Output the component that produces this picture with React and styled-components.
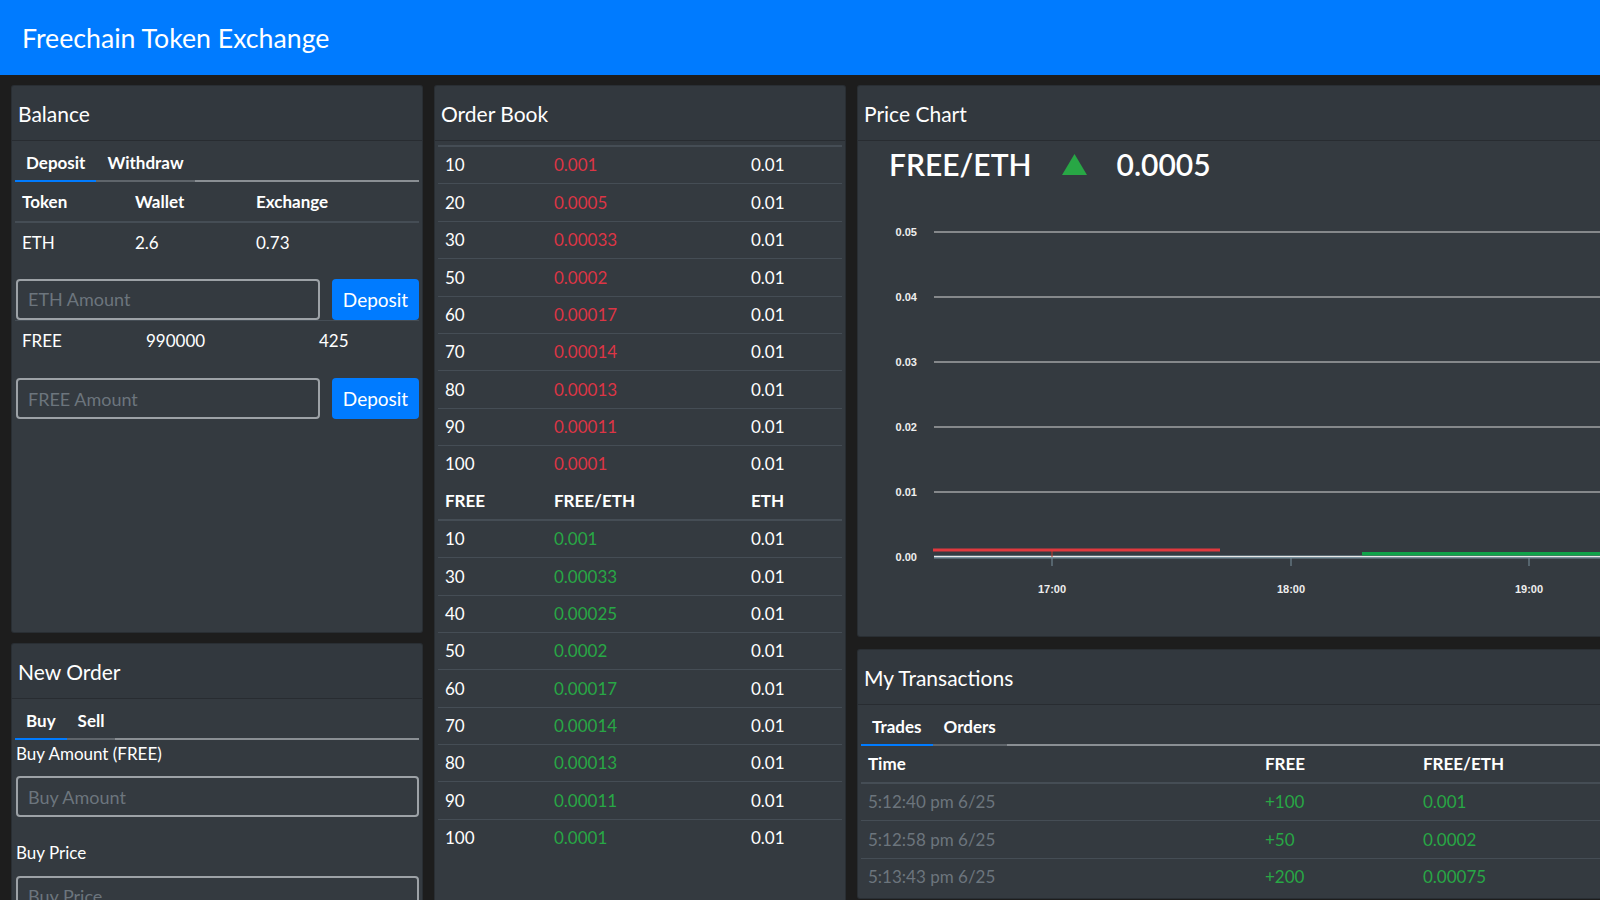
import React from "react";
import styled, { createGlobalStyle } from "styled-components";

const GlobalStyle = createGlobalStyle`
  html, body {
    margin: 0;
    padding: 0;
    background: #1d1d1d;
    overflow: hidden;
  }
  body {
    font-family: "Segoe UI", Lato, "Noto Sans", sans-serif;
    font-size: 17px;
    line-height: 1.5;
    color: #fff;
  }
  * { box-sizing: border-box; }
`;

const Navbar = styled.nav`
  height: 75px;
  background: #007bff;
  display: flex;
  align-items: center;
  padding: 0 22px;
`;

const Brand = styled.div`
  font-size: 26.7px;
  color: #fff;
  line-height: 1.2;
  margin-top: 2px;
`;

const Main = styled.main`
  display: grid;
  grid-template-columns: 412px 412px 850px;
  column-gap: 11px;
  align-items: start;
  padding: 10px 0 0 11px;
  width: 1720px;
`;

const Column = styled.div`
  display: flex;
  flex-direction: column;
  gap: ${(p) => p.$gap || 10}px;
`;

const Card = styled.section`
  background: #343a40;
  border: 1px solid rgba(0, 0, 0, 0.2);
  border-radius: 3px;
  height: ${(p) => (p.$height ? `${p.$height}px` : "auto")};
  overflow: hidden;
`;

const CardHeader = styled.header`
  padding: 15px 6px 14px;
  font-size: 21px;
  line-height: 25px;
  background: rgba(0, 0, 0, 0.03);
  border-bottom: 1px solid rgba(0, 0, 0, 0.2);
`;

const CardBody = styled.div`
  padding: ${(p) => p.$pt || 3}px 3px 3px;
`;

const Tabs = styled.ul`
  display: flex;
  list-style: none;
  margin: 0;
  padding: 0;
  border-bottom: 2px solid #8a8f94;
`;

const Tab = styled.li`
  padding: 6px 11px 4px;
  font-weight: 700;
  margin-bottom: -2px;
  border-bottom: 2px solid ${(p) => (p.$active ? "#007bff" : "#5f656b")};
`;

const Table = styled.table`
  width: 100%;
  border-collapse: collapse;
  table-layout: fixed;
  border-top: ${(p) => (p.$topLine ? "2px solid #454d55" : "none")};

  td, th {
    padding: ${(p) => p.$pad || 5.45}px 7px;
    line-height: 25.5px;
    text-align: left;
    white-space: nowrap;
  }
  th {
    font-weight: 700;
    border-bottom: 2px solid #454d55;
  }
  td {
    border-top: 1px solid #454d55;
  }
`;

const Cell = styled.td`
  color: ${(p) => p.$color || "#fff"};
`;

const AmountForm = styled.form`
  display: flex;
  gap: 12px;
  margin: ${(p) => p.$mt}px 0 0 1px;
`;

const Input = styled.input`
  flex: 1;
  width: 100%;
  height: 41px;
  background: transparent;
  border: 2px solid #9da2a7;
  border-radius: 4px;
  padding: 0 10px;
  font-family: inherit;
  font-size: 18px;
  color: #fff;
  &::placeholder { color: #6c757d; }
`;

const Button = styled.button`
  height: 41px;
  width: 87px;
  background: #007bff;
  border: none;
  border-radius: 4px;
  color: #fff;
  font-family: inherit;
  font-size: 19px;
`;

const Label = styled.div`
  margin: ${(p) => p.$mt}px 0 10px 1px;
`;

const Ticker = styled.div`
  display: flex;
  align-items: center;
  height: 46px;
  padding-left: 31px;
  font-size: 30px;
  font-weight: 600;
  gap: 30px;
`;

const TxTime = styled.span`
  color: #6c757d;
`;

const RED = "#dc3545";
const GREEN = "#28a745";

const asks = [
  ["10", "0.001"], ["20", "0.0005"], ["30", "0.00033"], ["50", "0.0002"],
  ["60", "0.00017"], ["70", "0.00014"], ["80", "0.00013"], ["90", "0.00011"], ["100", "0.0001"],
];
const bids = [
  ["10", "0.001"], ["30", "0.00033"], ["40", "0.00025"], ["50", "0.0002"],
  ["60", "0.00017"], ["70", "0.00014"], ["80", "0.00013"], ["90", "0.00011"], ["100", "0.0001"],
];
const trades = [
  ["5:12:40 pm 6/25", "+100", "0.001"],
  ["5:12:58 pm 6/25", "+50", "0.0002"],
  ["5:13:43 pm 6/25", "+200", "0.00075"],
];

const PriceChart = () => {
  const grid = [0.05, 0.04, 0.03, 0.02, 0.01];
  const ticks = [[194, "17:00"], [433, "18:00"], [671, "19:00"]];
  return (
    <svg width="850" height="420" style={{ display: "block" }}>
      <g fontFamily="'Liberation Sans', Arial, sans-serif" fontSize="11" fontWeight="700" fill="#eee">
        {grid.map((v, i) => (
          <g key={v}>
            <line x1="76" x2="850" y1={45 + i * 65} y2={45 + i * 65} stroke="#d6d6d6" strokeWidth="1.2" />
            <text x="59" y={49 + i * 65} textAnchor="end">{v.toFixed(2)}</text>
          </g>
        ))}
        <text x="59" y="374" textAnchor="end">0.00</text>
        {ticks.map(([x, t]) => (
          <g key={t}>
            <line x1={x} x2={x} y1="370" y2="379" stroke="#78909c" strokeWidth="1" />
            <text x={x} y="406" textAnchor="middle">{t}</text>
          </g>
        ))}
      </g>
      <line x1="76" x2="850" y1="370" y2="370" stroke="#78909c" strokeWidth="3" />
      <line x1="76" x2="850" y1="369.5" y2="369.5" stroke="#e8e8e8" strokeWidth="1" />
      <line x1="194" x2="194" y1="363" y2="370" stroke="#c0392b" strokeWidth="1" />
      <rect x="75" y="361.5" width="287" height="3" fill="#e0393e" />
      <rect x="504" y="365" width="346" height="3.5" fill="#0fa34a" />
    </svg>
  );
};

const App = () => {
  return (
    <>
      <GlobalStyle />
      <Navbar>
        <Brand>Freechain Token Exchange</Brand>
      </Navbar>
      <Main>
        <Column>
          <Card $height={548}>
            <CardHeader>Balance</CardHeader>
            <CardBody>
              <Tabs>
                <Tab $active>Deposit</Tab>
                <Tab>Withdraw</Tab>
              </Tabs>
              <Table $pad={7}>
                <colgroup><col width="113" /><col width="121" /><col /></colgroup>
                <thead>
                  <tr><th>Token</th><th>Wallet</th><th>Exchange</th></tr>
                </thead>
                <tbody>
                  <tr><Cell>ETH</Cell><Cell>2.6</Cell><Cell>0.73</Cell></tr>
                </tbody>
              </Table>
              <AmountForm $mt={16} onSubmit={(e) => e.preventDefault()}>
                <Input placeholder="ETH Amount" />
                <Button>Deposit</Button>
              </AmountForm>
              <Table $pad={7}>
                <colgroup><col width="124" /><col width="173" /><col /></colgroup>
                <tbody>
                  <tr><Cell>FREE</Cell><Cell>990000</Cell><Cell>425</Cell></tr>
                </tbody>
              </Table>
              <AmountForm $mt={18} onSubmit={(e) => e.preventDefault()}>
                <Input placeholder="FREE Amount" />
                <Button>Deposit</Button>
              </AmountForm>
            </CardBody>
          </Card>
          <Card>
            <CardHeader>New Order</CardHeader>
            <CardBody>
              <Tabs>
                <Tab $active>Buy</Tab>
                <Tab>Sell</Tab>
              </Tabs>
              <Label $mt={1}>Buy Amount (FREE)</Label>
              <AmountForm $mt={0} onSubmit={(e) => e.preventDefault()}>
                <Input placeholder="Buy Amount" />
              </AmountForm>
              <Label $mt={23}>Buy Price</Label>
              <AmountForm $mt={0} onSubmit={(e) => e.preventDefault()}>
                <Input placeholder="Buy Price" />
              </AmountForm>
            </CardBody>
          </Card>
        </Column>

        <Column>
          <Card $height={840}>
            <CardHeader>Order Book</CardHeader>
            <CardBody $pt={4}>
              <Table $topLine>
                <colgroup><col width="109" /><col width="197" /><col /></colgroup>
                <tbody>
                  {asks.map(([amt, price]) => (
                    <tr key={`a${amt}`}>
                      <Cell>{amt}</Cell>
                      <Cell $color={RED}>{price}</Cell>
                      <Cell>0.01</Cell>
                    </tr>
                  ))}
                  <tr><th>FREE</th><th>FREE/ETH</th><th>ETH</th></tr>
                  {bids.map(([amt, price]) => (
                    <tr key={`b${amt}`}>
                      <Cell>{amt}</Cell>
                      <Cell $color={GREEN}>{price}</Cell>
                      <Cell>0.01</Cell>
                    </tr>
                  ))}
                </tbody>
              </Table>
            </CardBody>
          </Card>
        </Column>

        <Column $gap={12}>
          <Card $height={552}>
            <CardHeader>Price Chart</CardHeader>
            <Ticker>
              <span>FREE/ETH</span>
              <svg width="25" height="21" viewBox="0 0 25 21">
                <polygon points="12.5,0 25,21 0,21" fill={GREEN} />
              </svg>
              <span>0.0005</span>
            </Ticker>
            <PriceChart />
          </Card>
          <Card>
            <CardHeader>My Transactions</CardHeader>
            <CardBody>
              <Tabs>
                <Tab $active>Trades</Tab>
                <Tab>Orders</Tab>
              </Tabs>
              <Table>
                <colgroup><col width="397" /><col width="158" /><col /></colgroup>
                <thead>
                  <tr><th>Time</th><th>FREE</th><th>FREE/ETH</th></tr>
                </thead>
                <tbody>
                  {trades.map(([t, amt, price]) => (
                    <tr key={t}>
                      <Cell><TxTime>{t}</TxTime></Cell>
                      <Cell $color={GREEN}>{amt}</Cell>
                      <Cell $color={GREEN}>{price}</Cell>
                    </tr>
                  ))}
                </tbody>
              </Table>
            </CardBody>
          </Card>
        </Column>
      </Main>
    </>
  );
};

export default App;
